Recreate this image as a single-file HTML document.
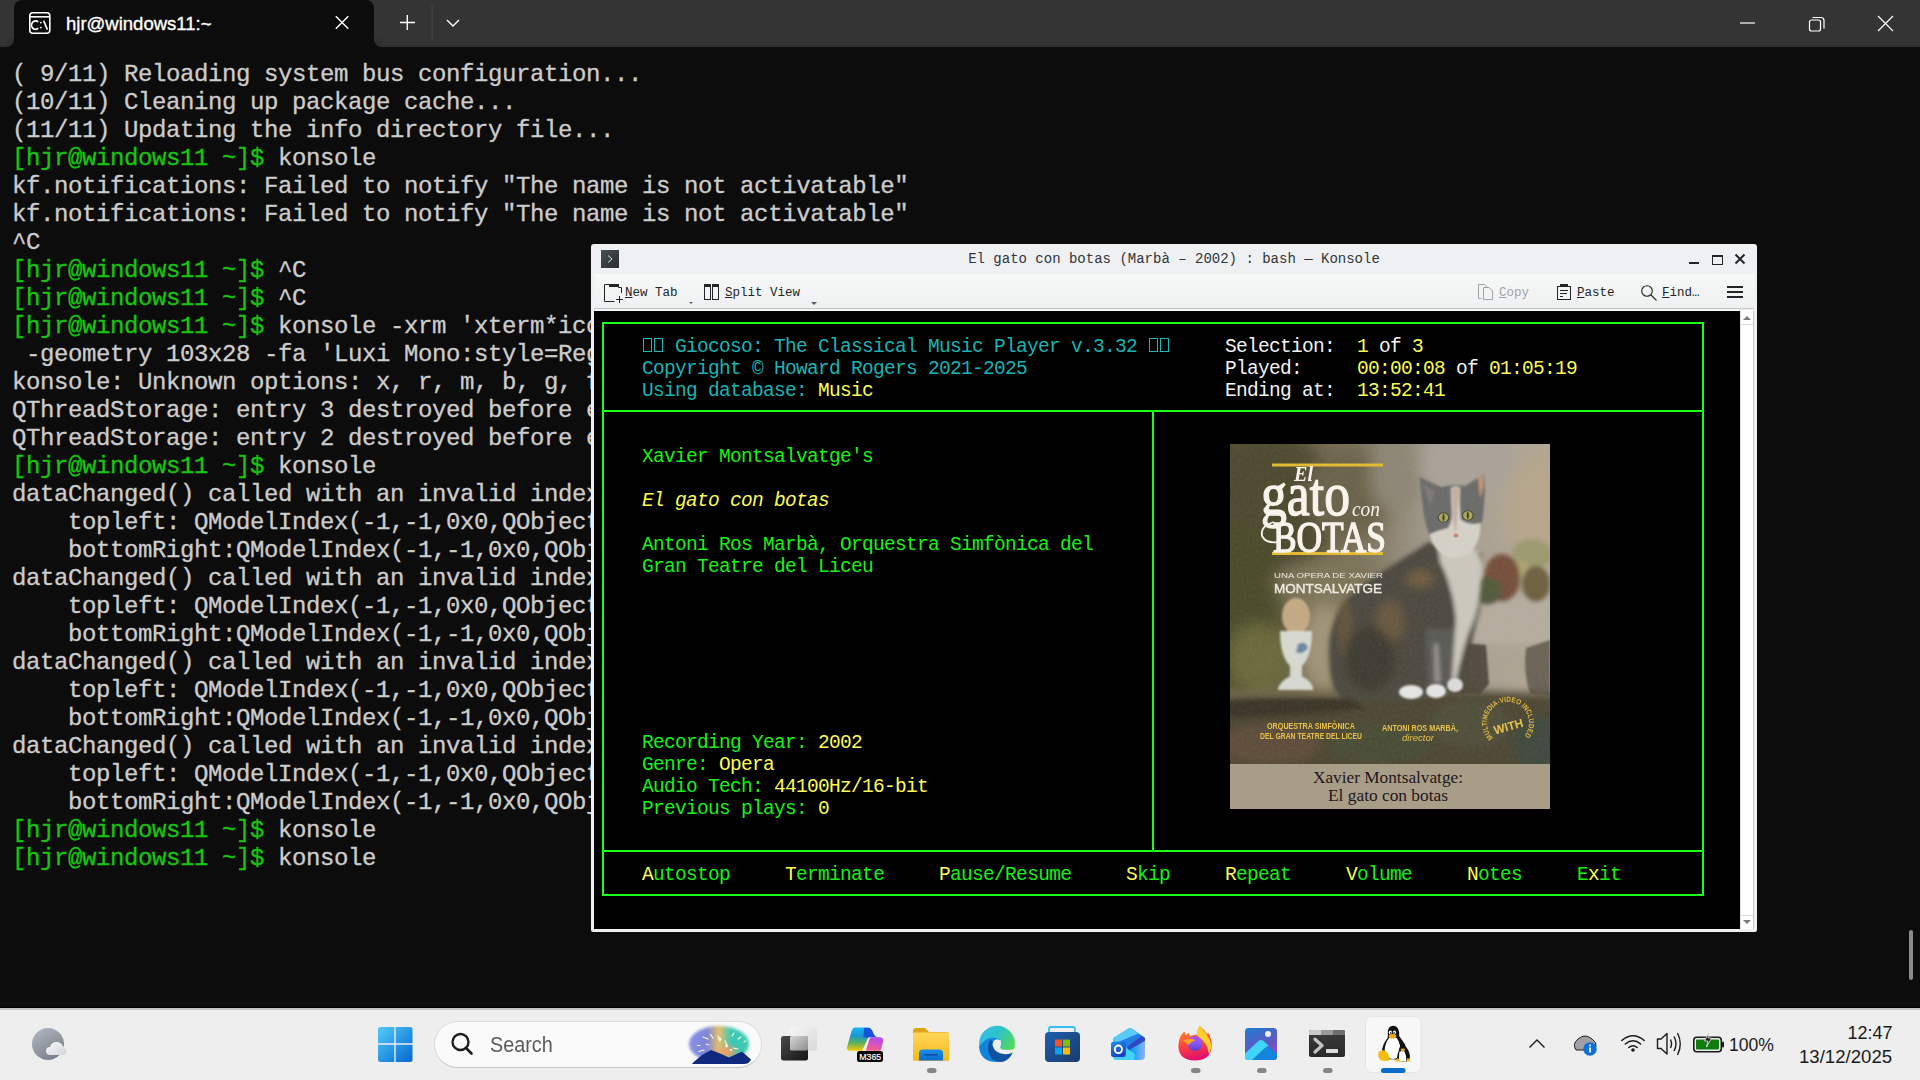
<!DOCTYPE html>
<html><head><meta charset="utf-8">
<style>
*{margin:0;padding:0;box-sizing:border-box}
html,body{width:1920px;height:1080px;overflow:hidden;background:#0c0c0c}
body{position:relative;font-family:"Liberation Sans",sans-serif}
.abs{position:absolute}
/* Windows terminal title bar */
#wtbg{position:absolute;left:0;top:0;width:1920px;height:47px;background:#343434;box-shadow:inset 0 -2px 0 #2f2f2f}
#wtc1{position:absolute;left:6px;top:39px;width:8px;height:8px;background:radial-gradient(circle at 0 0,#2f2f2f 7.5px,#0c0c0c 8.5px)}
#wtc2{position:absolute;left:374px;top:39px;width:8px;height:8px;background:radial-gradient(circle at 100% 0,#2f2f2f 7.5px,#0c0c0c 8.5px)}
#wttab{position:absolute;left:14px;top:0;width:360px;height:47px;background:#0c0c0c;border-radius:8px 8px 0 0}
#wttitle{position:absolute;left:66px;top:13px;font-size:18.5px;color:#fff;-webkit-text-stroke:0.35px #fff}
/* terminal text */
#term{position:absolute;left:12px;top:61px;font-family:"Liberation Mono",monospace;font-size:24px;letter-spacing:-0.4px;line-height:28px;color:#cccccc;white-space:pre;-webkit-text-stroke:0.3px currentColor}
#term .g{color:#16c60c}
/* konsole window */
#kwin{position:absolute;left:591px;top:244px;width:1166px;height:688px;background:#eff0f1;border-radius:3px 3px 2px 2px}
#ktitle{position:absolute;left:0;top:1px;width:1166px;height:29px;text-align:center;font-family:"Liberation Mono",monospace;font-size:14px;line-height:29px;color:#31363b;padding-left:0}
#ktb{position:absolute;left:3px;top:30px;width:1160px;height:35px;background:linear-gradient(#f7f8f8,#eff0f1);border-bottom:1px solid #c3c5c7}
#ktb2{position:absolute;left:3px;top:66px;width:1160px;height:1px;background:#fcfcfc}
#kterm{position:absolute;left:3px;top:67px;width:1146px;height:618px;background:#000}
#kscroll{position:absolute;left:1149px;top:67px;width:14px;height:618px;background:#fff;border-right:1px solid #c8c8c8;border-left:1px solid #e4e4e4}
.tbt{position:absolute;top:2px;font-family:"Liberation Mono",monospace;font-size:12.5px;line-height:35px;color:#232627}
#kgrid{position:absolute;left:0;top:0;font-family:"Liberation Mono",monospace;font-size:19.5px;letter-spacing:-0.7px;line-height:22px;white-space:pre;color:#18f018}
.kr{position:absolute;height:22px;white-space:pre;margin-top:2px}
.it{font-style:italic}
.tofu{display:inline-block;width:11px;height:22px;position:relative;vertical-align:top}
.tofu:after{content:"";position:absolute;left:1px;top:2px;width:9px;height:14px;border:1.5px solid #1ab8b8;box-sizing:border-box}
.c{color:#1ab3b3}.w{color:#f2f2f2}.y{color:#fcfc54}.gr{color:#18f018}
.gl{position:absolute;background:#18ff18}
/* taskbar */
#tbar{position:absolute;left:0;top:1007px;width:1920px;height:73px;background:#eeeeee;border-top:1px solid #000;box-shadow:inset 0 2px 0 #c3c3c3}
#search{position:absolute;left:434px;top:1021px;width:328px;height:47px;border-radius:24px;background:#fafafa;border:1px solid #dcdcdc;border-bottom-color:#c4c4c4}
.tt{position:absolute;font-family:"Liberation Sans",sans-serif;color:#1b1b1b;white-space:pre}
</style></head><body>
<div id="wtbg"></div><div id="wtc1"></div><div id="wtc2"></div>
<div id="wttab"></div>
<svg class="abs" style="left:0;top:0" width="480" height="47">
  <g fill="none" stroke="#fff" stroke-width="1.6">
    <rect x="29.8" y="12.8" width="20" height="20.5" rx="3"/>
    <line x1="30" y1="16.8" x2="50" y2="16.8"/>
  </g>
  <path d="M38.2 22 A3.9 4.3 0 1 0 38.2 28.2" fill="none" stroke="#fff" stroke-width="1.7"/><circle cx="40.8" cy="22.6" r="0.95" fill="#fff"/><circle cx="40.8" cy="27.6" r="0.95" fill="#fff"/><path d="M43.6 20.6 L47.4 29.6" stroke="#fff" stroke-width="1.6"/>
  <g stroke="#fff" stroke-width="1.4" fill="none">
    <path d="M335.8 16.2 L348.3 28.8 M348.3 16.2 L335.8 28.8"/>
    <path d="M400 22.5 H415 M407.3 15 V30"/>
    <path d="M447 20 L453 26 L459 20"/>
  </g>
  <rect x="431.6" y="5" width="1" height="36" fill="#4a4a4a"/>
</svg>
<div id="wttitle">hjr@windows11:~</div>
<svg class="abs" style="left:1700px;top:0" width="220" height="47">
  <g stroke="#fff" stroke-width="1.2" fill="none">
    <path d="M40 23 H55"/>
    <rect x="109.5" y="20" width="11" height="11" rx="2"/>
    <path d="M112.5 17.5 H121 Q124 17.5 124 20.5 V28.5"/>
    <path d="M178 16 L193 31 M193 16 L178 31"/>
  </g>
</svg>
<div id="term"><span>( 9/11) Reloading system bus configuration...
(10/11) Cleaning up package cache...
(11/11) Updating the info directory file...
<span class="g">[hjr@windows11 ~]$</span> konsole
kf.notifications: Failed to notify "The name is not activatable"
kf.notifications: Failed to notify "The name is not activatable"
^C
<span class="g">[hjr@windows11 ~]$</span> ^C
<span class="g">[hjr@windows11 ~]$</span> ^C
<span class="g">[hjr@windows11 ~]$</span> konsole -xrm 'xterm*iconHint: /home/hjr/giocoso.png'
 -geometry 103x28 -fa 'Luxi Mono:style=Regular' -fs 11
konsole: Unknown options: x, r, m, b, g, f, s
QThreadStorage: entry 3 destroyed before end of thread
QThreadStorage: entry 2 destroyed before end of thread
<span class="g">[hjr@windows11 ~]$</span> konsole
dataChanged() called with an invalid index range:
    topleft: QModelIndex(-1,-1,0x0,QObject(0x0))
    bottomRight:QModelIndex(-1,-1,0x0,QObject(0x0))
dataChanged() called with an invalid index range:
    topleft: QModelIndex(-1,-1,0x0,QObject(0x0))
    bottomRight:QModelIndex(-1,-1,0x0,QObject(0x0))
dataChanged() called with an invalid index range:
    topleft: QModelIndex(-1,-1,0x0,QObject(0x0))
    bottomRight:QModelIndex(-1,-1,0x0,QObject(0x0))
dataChanged() called with an invalid index range:
    topleft: QModelIndex(-1,-1,0x0,QObject(0x0))
    bottomRight:QModelIndex(-1,-1,0x0,QObject(0x0))
<span class="g">[hjr@windows11 ~]$</span> konsole
<span class="g">[hjr@windows11 ~]$</span> konsole</span></div>

<div id="kwin">
  <div id="ktitle">El gato con botas (Marbà – 2002) : bash — Konsole</div>
  <div id="ktb">
    <div class="tbt" style="left:31px"><u>N</u>ew Tab</div>
    <div class="tbt" style="left:131px"><u>S</u>plit View</div>
    <div class="tbt" style="left:905px;color:#a0a2a4"><u>C</u>opy</div>
    <div class="tbt" style="left:983px"><u>P</u>aste</div>
    <div class="tbt" style="left:1068px"><u>F</u>ind…</div>
  </div>
  <div id="ktb2"></div>
  <div id="kterm"></div>
  <div id="kscroll"></div>
  <svg class="abs" style="left:0;top:0" width="1166" height="688">
    <defs><linearGradient id="kig" x1="0" y1="0" x2="1" y2="1"><stop offset="0" stop-color="#475050"/><stop offset="1" stop-color="#2a2f2f"/></linearGradient></defs>
    <rect x="10" y="6" width="18" height="18" fill="url(#kig)"/>
    <path d="M17 11.5 L21 15 L17 18.5" stroke="#dfe3e3" stroke-width="1" fill="none"/>
    <!-- window buttons -->
    <rect x="1098" y="18" width="10" height="2" fill="#232627"/>
    <rect x="1121.5" y="11.5" width="10" height="9" fill="none" stroke="#232627" stroke-width="1"/>
    <rect x="1121" y="11" width="11" height="2" fill="#232627"/>
    <path d="M1144.5 10.5 L1153.5 19.5 M1153.5 10.5 L1144.5 19.5" stroke="#232627" stroke-width="2"/>
    <!-- new tab icon -->
    <g fill="none" stroke="#232627" stroke-width="1">
      <path d="M13.5 40.5 V57.5 H23.5 M30.5 49 V43.5 H27.5 V40.5 H13.5"/>
      <path d="M28.5 52 V59 M25 55.5 H32"/>
    </g>
    <rect x="18" y="40" width="10" height="3" fill="#232627"/>
    <path d="M98 58 L102 58 L100 60 Z" fill="#5c5f62"/>
    <!-- split icon -->
    <g fill="none" stroke="#232627" stroke-width="1">
      <rect x="113.5" y="40.5" width="6" height="15"/>
      <rect x="121.5" y="40.5" width="6" height="15"/>
    </g>
    <rect x="113" y="40" width="7" height="3" fill="#232627"/><rect x="121" y="40" width="7" height="3" fill="#232627"/>
    <path d="M220 58 L226 58 L223 61 Z" fill="#5c5f62"/>
    <!-- copy icon -->
    <g fill="none" stroke="#a0a2a4" stroke-width="1" transform="translate(3 0)">
      <path d="M887.5 54.5 H884.5 V40.5 H890.5 L893.5 43.5"/>
      <path d="M889.5 43.5 H895 L898.5 47 V55.5 H889.5 Z"/>
    </g>
    <!-- paste icon -->
    <g fill="none" stroke="#232627" stroke-width="1">
      <rect x="966.5" y="42.5" width="13" height="13"/>
      <path d="M969 46.5 H977 M969 49.5 H976 M969 52.5 H972"/>
    </g>
    <rect x="969" y="40" width="8" height="3" fill="#232627"/>
    <!-- find icon -->
    <g fill="none" stroke="#232627" stroke-width="1.1">
      <circle cx="1056" cy="47" r="5.3"/>
      <path d="M1060 51 L1065.5 56.5"/>
    </g>
    <!-- hamburger -->
    <rect x="1136" y="42" width="16" height="2" fill="#232627"/>
    <rect x="1136" y="47" width="16" height="2" fill="#232627"/>
    <rect x="1136" y="52" width="16" height="2" fill="#232627"/>
    <!-- scroll arrows -->
    <path d="M1152 76 L1156 72 L1160 76 Z" fill="#787a7c"/>
    <path d="M1152 676 L1156 680 L1160 676 Z" fill="#787a7c"/>
    <rect x="1150" y="80" width="12" height="1" fill="#d8d8d8"/>
    <rect x="1150" y="671" width="12" height="1" fill="#d8d8d8"/>
  </svg>
</div>
<svg class="abs" style="left:1230px;top:444px" width="320" height="365" viewBox="0 0 320 365">
 <defs>
  <filter id="b8" x="-30%" y="-30%" width="160%" height="160%"><feGaussianBlur stdDeviation="8"/></filter>
  <filter id="b4" x="-30%" y="-30%" width="160%" height="160%"><feGaussianBlur stdDeviation="4"/></filter>
  <filter id="b2" x="-30%" y="-30%" width="160%" height="160%"><feGaussianBlur stdDeviation="2"/></filter>
  <filter id="b1" x="-30%" y="-30%" width="160%" height="160%"><feGaussianBlur stdDeviation="1"/></filter>
  <filter id="noise" x="0" y="0" width="100%" height="100%">
   <feTurbulence type="fractalNoise" baseFrequency="0.35" numOctaves="2" seed="3"/>
   <feColorMatrix type="matrix" values="0 0 0 0 0.5  0 0 0 0 0.5  0 0 0 0 0.5  0 0 0 -1.6 1.3"/>
  </filter>
  <clipPath id="acl"><rect x="0" y="0" width="320" height="320"/></clipPath>
  <linearGradient id="abg" x1="0" y1="0" x2="1" y2="0">
   <stop offset="0" stop-color="#57512f"/><stop offset="0.4" stop-color="#7c735a"/><stop offset="0.65" stop-color="#a69e92"/><stop offset="1" stop-color="#b2a794"/>
  </linearGradient>
 </defs>
 <g clip-path="url(#acl)">
  <rect x="0" y="0" width="320" height="320" fill="url(#abg)"/>
  <g filter="url(#b8)">
   <ellipse cx="40" cy="60" rx="70" ry="70" fill="#4e4a2e"/>
   <ellipse cx="15" cy="170" rx="35" ry="90" fill="#4c4c2c"/>
   <ellipse cx="28" cy="215" rx="30" ry="35" fill="#6c6a3a"/>
   <ellipse cx="120" cy="50" rx="45" ry="45" fill="#6a6248"/>
   <ellipse cx="165" cy="30" rx="25" ry="40" fill="#8e8674"/>
   <ellipse cx="100" cy="140" rx="55" ry="25" fill="#7e7458"/>
   <ellipse cx="95" cy="205" rx="25" ry="45" fill="#a09478"/>
   <ellipse cx="240" cy="20" rx="50" ry="30" fill="#aaa39a"/>
   <ellipse cx="305" cy="70" rx="30" ry="60" fill="#b6a68c"/>
   <ellipse cx="270" cy="175" rx="50" ry="25" fill="#b4ab9c"/>
  </g>
  <!-- bowl and fruit -->
  <g filter="url(#b2)">
   <path d="M238 158 Q280 150 320 156 V198 Q280 202 238 196Z" fill="#b6ad9f"/>
   <ellipse cx="302" cy="110" rx="20" ry="15" fill="#9c9a70"/>
   <ellipse cx="285" cy="126" rx="16" ry="10" fill="#aea270"/>
   <ellipse cx="272" cy="134" rx="18" ry="24" fill="#74503a"/>
   <ellipse cx="257" cy="147" rx="15" ry="14" fill="#525a3a"/>
   <ellipse cx="306" cy="140" rx="14" ry="18" fill="#6e6040"/>
  </g>
  <!-- stones -->
  <g filter="url(#b1)">
   <path d="M222 198 L256 201 L259 240 L250 250 L220 250Z" fill="#524c40"/>
   <path d="M296 204 L320 196 V252 L300 250 Q293 228 296 204Z" fill="#6a6456"/>
  </g>
  <!-- ground -->
  <g filter="url(#b4)">
   <path d="M-10 248 Q80 244 160 250 L230 246 L330 250 V330 H-10Z" fill="#4e4632"/>
   <path d="M-10 250 Q60 248 120 252" stroke="#8a7e5e" stroke-width="4" fill="none"/>
   <path d="M-10 260 Q70 255 130 260 Q110 271 -10 273Z" fill="#3a3626"/>
   <ellipse cx="150" cy="300" rx="50" ry="20" fill="#4a4e34"/>
   <ellipse cx="240" cy="280" rx="40" ry="25" fill="#50503a"/>
   <ellipse cx="40" cy="300" rx="50" ry="20" fill="#5e4e3a"/>
   <ellipse cx="305" cy="300" rx="22" ry="30" fill="#404a3c"/>
  </g>
  <!-- egg cup -->
  <g filter="url(#b1)">
   <ellipse cx="66" cy="172" rx="14" ry="18" fill="#c4aa84"/>
   <path d="M50 187 H82 Q82 212 72 222 V232 Q84 239 83 246 H48 Q48 239 60 232 V222 Q50 212 50 187Z" fill="#d8dad2"/>
   <path d="M68 200 Q76 196 78 204 Q72 212 66 208Z" fill="#6a88a0"/>
  </g>
  <!-- cat body -->
  <g filter="url(#b2)">
   <path d="M198 98 C175 115 135 135 114 158 Q97 182 99 215 Q100 250 115 256 L170 256 L200 252 L232 246 Q240 200 250 165 L252 110 Q230 108 198 98Z" fill="#4e4a40"/>
   <ellipse cx="190" cy="135" rx="14" ry="9" fill="#8a6a42" opacity="0.6" filter="url(#b4)"/>
   <ellipse cx="160" cy="178" rx="14" ry="22" fill="#7e6440" opacity="0.6" filter="url(#b4)"/>
   <ellipse cx="115" cy="185" rx="8" ry="28" fill="#6e5a3c" opacity="0.6"/>
   <ellipse cx="140" cy="215" rx="25" ry="32" fill="#38342c" opacity="0.7" filter="url(#b4)"/>
   <path d="M196 185 L224 185 L224 240 L198 244Z" fill="#5e5e5a" opacity="0.8"/>
   <path d="M208 102 Q252 94 252 125 Q250 165 240 185 Q234 200 226 236 L222 236 Q224 200 226 175 Q222 140 210 118 Z" fill="#cdc8be"/><path d="M204 200 L208 200 L210 238 L205 238Z" fill="#b8b6b0" opacity="0.7"/>
   <path d="M-10 258 Q60 254 120 255 L135 264 Q60 268 -10 272Z" fill="#3a3628"/>
  </g>
  <g filter="url(#b1)">
   <ellipse cx="181" cy="248" rx="12" ry="7" fill="#e6e6e4"/>
   <ellipse cx="206" cy="247" rx="10" ry="7" fill="#e6e6e4"/>
   <ellipse cx="225" cy="241" rx="8" ry="7" fill="#dededc"/>
  </g>
  <!-- cat head -->
  <g filter="url(#b1)">
   <path d="M189.5 33 L211 43 Q223 40 235 42 L254 30 Q256 50 252.5 75 Q250 98 240 108 Q232 113 225 113 Q214 112 206 102 Q197 90 194 72 Q191 52 189.5 33Z" fill="#6a6a68"/>
   <path d="M193 40 L205 48 L200 62Z" fill="#7c7876"/>
   <path d="M221 44 Q226 41 230 44 Q229 62 231 76 Q240 82 251 79 Q251 96 242 107 Q233 114 225 114 Q212 113 205 103 Q200 96 200 90 Q210 86 218 84 Q222 78 222 70 Q221 56 221 44Z" fill="#d6d1c8"/>
   <path d="M222 45 Q226 42 229 45 Q227.5 60 227 78 L225.5 90 L223.5 78 Q223 60 222 45Z" fill="#c2ae9e"/>
   <path d="M248 34 L253.5 31 Q254 45 250 54Z" fill="#c09478"/>
  </g>
  <ellipse cx="213.5" cy="73.5" rx="5.8" ry="5" fill="#3e3e2a"/>
  <ellipse cx="237.8" cy="71.5" rx="5.8" ry="5" fill="#3e3e2a"/>
  <ellipse cx="213.5" cy="73.5" rx="4.8" ry="4.2" fill="#aaa658"/>
  <ellipse cx="237.8" cy="71.5" rx="4.8" ry="4.2" fill="#aaa658"/>
  <ellipse cx="213.5" cy="73.5" rx="1" ry="3.4" fill="#3a3a20"/>
  <ellipse cx="237.8" cy="71.5" rx="1" ry="3.4" fill="#3a3a20"/>
  <ellipse cx="226" cy="91.5" rx="2.6" ry="2" fill="#c48a72"/>
  <!-- noise overlay -->
  <rect x="0" y="0" width="320" height="320" filter="url(#noise)" opacity="0.07"/>
  <!-- title text -->
  <rect x="42" y="19.5" width="111" height="3" fill="#e2ba34"/>
  <rect x="42" y="108" width="111" height="3" fill="#e2ba34"/>
  <g fill="#f8f4ec" font-family="Liberation Serif">
   <text x="64" y="37" font-size="21" font-style="italic" font-weight="bold" textLength="19" lengthAdjust="spacingAndGlyphs">El</text>
   <text x="31" y="71" font-size="62" stroke="#f8f4ec" stroke-width="1.4" textLength="89" lengthAdjust="spacingAndGlyphs">gato</text>
   <text x="122" y="72" font-size="21" font-style="italic" textLength="28" lengthAdjust="spacingAndGlyphs">con</text>
   <text x="43" y="108" font-size="44" stroke="#f8f4ec" stroke-width="1.5" textLength="113" lengthAdjust="spacingAndGlyphs">BOTAS</text>
  </g>
  <path d="M44 78 Q30 82 32 92 Q36 100 50 98" stroke="#f8f4ec" stroke-width="1.8" fill="none"/>
  <g fill="#eeeae2" font-family="Liberation Sans">
   <text x="44" y="133.5" font-size="8" textLength="109" lengthAdjust="spacingAndGlyphs">UNA OPERA DE XAVIER</text>
   <text x="44" y="148.5" font-size="12.5" stroke="#eeeae2" stroke-width="0.4" textLength="108" lengthAdjust="spacingAndGlyphs">MONTSALVATGE</text>
  </g>
  <g fill="#e8c24c" font-family="Liberation Sans" font-weight="bold">
   <text x="37" y="285" font-size="8.5" textLength="88" lengthAdjust="spacingAndGlyphs">ORQUESTRA SIMFÒNICA</text>
   <text x="30" y="295" font-size="8.5" textLength="102" lengthAdjust="spacingAndGlyphs">DEL GRAN TEATRE DEL LICEU</text>
   <text x="152" y="287" font-size="8.5" textLength="76" lengthAdjust="spacingAndGlyphs">ANTONI ROS MARBÀ,</text>
   <text x="172" y="297" font-size="9" font-style="italic" font-weight="normal" textLength="32" lengthAdjust="spacingAndGlyphs">director</text>
  </g>
  <path id="wc" d="M263.2 293.8 A21 21 0 1 1 292.8 293.8" fill="none"/>
  <text font-family="Liberation Sans" font-weight="bold" font-size="7.5" fill="#e0b840"><textPath href="#wc" textLength="96" lengthAdjust="spacingAndGlyphs">MULTIMEDIA-VIDEO INCLUDED</textPath></text>
  <text x="263" y="287" font-family="Liberation Sans" font-size="12" font-weight="bold" fill="#e8c24c" transform="rotate(-15 277 281)" textLength="30" lengthAdjust="spacingAndGlyphs">WITH</text>
 </g>
 <rect x="0" y="320" width="320" height="45" fill="#a89d87"/>
 <g fill="#1e1620" font-family="Liberation Serif" text-anchor="middle">
  <text x="158" y="338.5" font-size="16.5" textLength="150" lengthAdjust="spacingAndGlyphs">Xavier Montsalvatge:</text>
  <text x="158" y="356.5" font-size="16.5" textLength="120" lengthAdjust="spacingAndGlyphs">El gato con botas</text>
 </g>
</svg>
<div id="kgrid">
<div class="kr" style="left:642px;top:334px"><span class="c"><i class="tofu"></i><i class="tofu"></i> Giocoso: The Classical Music Player v.3.32 <i class="tofu"></i><i class="tofu"></i></span></div>
<div class="kr" style="left:1225px;top:334px"><span class="w">Selection:  </span><span class="y">1</span><span class="w"> of </span><span class="y">3</span></div>
<div class="kr" style="left:642px;top:356px"><span class="c">Copyright © Howard Rogers 2021-2025</span></div>
<div class="kr" style="left:1225px;top:356px"><span class="w">Played:     </span><span class="y">00:00:08</span><span class="w"> of </span><span class="y">01:05:19</span></div>
<div class="kr" style="left:642px;top:378px"><span class="c">Using database: </span><span class="y">Music</span></div>
<div class="kr" style="left:1225px;top:378px"><span class="w">Ending at:  </span><span class="y">13:52:41</span></div>
<div class="kr" style="left:642px;top:444px"><span class="gr">Xavier Montsalvatge's</span></div>
<div class="kr" style="left:642px;top:488px"><span class="y it">El gato con botas</span></div>
<div class="kr" style="left:642px;top:532px"><span class="gr">Antoni Ros Marbà, Orquestra Simfònica del</span></div>
<div class="kr" style="left:642px;top:554px"><span class="gr">Gran Teatre del Liceu</span></div>
<div class="kr" style="left:642px;top:730px"><span class="gr">Recording Year: </span><span class="y">2002</span></div>
<div class="kr" style="left:642px;top:752px"><span class="gr">Genre: </span><span class="y">Opera</span></div>
<div class="kr" style="left:642px;top:774px"><span class="gr">Audio Tech: </span><span class="y">44100Hz/16-bit</span></div>
<div class="kr" style="left:642px;top:796px"><span class="gr">Previous plays: </span><span class="y">0</span></div>
<div class="kr" style="left:642px;top:862px"><span class="y">A</span><span class="gr">u</span><span class="gr">t</span><span class="gr">o</span><span class="gr">s</span><span class="gr">t</span><span class="gr">o</span><span class="gr">p</span></div>
<div class="kr" style="left:785px;top:862px"><span class="y">T</span><span class="gr">e</span><span class="gr">r</span><span class="gr">m</span><span class="gr">i</span><span class="gr">n</span><span class="gr">a</span><span class="gr">t</span><span class="gr">e</span></div>
<div class="kr" style="left:939px;top:862px"><span class="y">P</span><span class="gr">a</span><span class="gr">u</span><span class="gr">s</span><span class="gr">e</span><span class="gr">/</span><span class="gr">R</span><span class="gr">e</span><span class="gr">s</span><span class="gr">u</span><span class="gr">m</span><span class="gr">e</span></div>
<div class="kr" style="left:1126px;top:862px"><span class="y">S</span><span class="gr">k</span><span class="gr">i</span><span class="gr">p</span></div>
<div class="kr" style="left:1225px;top:862px"><span class="y">R</span><span class="gr">e</span><span class="gr">p</span><span class="gr">e</span><span class="gr">a</span><span class="gr">t</span></div>
<div class="kr" style="left:1346px;top:862px"><span class="y">V</span><span class="gr">o</span><span class="gr">l</span><span class="gr">u</span><span class="gr">m</span><span class="gr">e</span></div>
<div class="kr" style="left:1467px;top:862px"><span class="y">N</span><span class="gr">o</span><span class="gr">t</span><span class="gr">e</span><span class="gr">s</span></div>
<div class="kr" style="left:1577px;top:862px"><span class="gr">E</span><span class="y">x</span><span class="gr">i</span><span class="gr">t</span></div>
<div class="gl" style="left:602px;top:322px;width:1102px;height:2px"></div>
<div class="gl" style="left:602px;top:410px;width:1102px;height:2px"></div>
<div class="gl" style="left:602px;top:850px;width:1102px;height:2px"></div>
<div class="gl" style="left:602px;top:894px;width:1102px;height:2px"></div>
<div class="gl" style="left:602px;top:322px;width:2px;height:574px"></div>
<div class="gl" style="left:1702px;top:322px;width:2px;height:574px"></div>
<div class="gl" style="left:1152px;top:410px;width:2px;height:442px"></div>
</div>

<div class="abs" style="left:1909px;top:930px;width:4px;height:50px;border-radius:2px;background:#8a8a8a"></div>
<div id="tbar"></div>
<div id="search"></div>
<div class="tt" style="left:490px;top:1032px;font-size:22px;color:#5b5b5b;transform:scaleX(0.9);transform-origin:0 0">Search</div>
<div class="tt" style="left:1729px;top:1034.5px;font-size:17.6px">100%</div>
<div class="tt" style="left:1847.5px;top:1022.5px;font-size:18px">12:47</div>
<div class="tt" style="left:1799px;top:1046px;font-size:18.6px">13/12/2025</div>
<svg class="abs" style="left:0;top:1008px" width="1920" height="72">
 <defs>
  <linearGradient id="moon" x1="0" y1="0" x2="0.6" y2="1"><stop offset="0" stop-color="#b3bac3"/><stop offset="1" stop-color="#7c828a"/></linearGradient>
  <linearGradient id="cloudg" x1="0" y1="0" x2="1" y2="1"><stop offset="0" stop-color="#fbfbfc"/><stop offset="1" stop-color="#cfd3d9"/></linearGradient>
  <linearGradient id="winlogo" gradientUnits="userSpaceOnUse" x1="378" y1="19" x2="413" y2="54"><stop offset="0" stop-color="#52cbf7"/><stop offset="1" stop-color="#0366d1"/></linearGradient>
  <linearGradient id="fw1" x1="0" y1="0" x2="1" y2="0"><stop offset="0" stop-color="#8a8ee8"/><stop offset="0.3" stop-color="#7a86d8"/><stop offset="0.5" stop-color="#e8c068"/><stop offset="0.7" stop-color="#38c8b8"/><stop offset="1" stop-color="#40c8b0"/></linearGradient><filter id="fwb" x="-30%" y="-30%" width="160%" height="160%"><feGaussianBlur stdDeviation="1.8"/></filter><filter id="fwb2" x="-50%" y="-50%" width="200%" height="200%"><feGaussianBlur stdDeviation="2.5"/></filter>
  <linearGradient id="tvl" x1="0" y1="0" x2="1" y2="1"><stop offset="0" stop-color="#f6f6f6"/><stop offset="1" stop-color="#d8d8d8"/></linearGradient>
  <linearGradient id="tvd" x1="0" y1="0" x2="1" y2="1"><stop offset="0" stop-color="#4a4a4a"/><stop offset="1" stop-color="#141414"/></linearGradient>
  <linearGradient id="tvm" x1="0" y1="0" x2="1" y2="1"><stop offset="0" stop-color="#d6d6d6"/><stop offset="1" stop-color="#8e8e8e"/></linearGradient>
  <linearGradient id="cop1" x1="0" y1="0" x2="0" y2="1"><stop offset="0" stop-color="#18b4f8"/><stop offset="0.35" stop-color="#1a98d0"/><stop offset="0.65" stop-color="#58b060"/><stop offset="1" stop-color="#f8c800"/></linearGradient>
  <linearGradient id="cop2" x1="0.6" y1="0" x2="0.3" y2="1"><stop offset="0" stop-color="#b04cf0"/><stop offset="1" stop-color="#fc5c8a"/></linearGradient>
  <linearGradient id="foldb" x1="0" y1="0" x2="0" y2="1"><stop offset="0" stop-color="#1a90e8"/><stop offset="1" stop-color="#0a6ccc"/></linearGradient><linearGradient id="fold" x1="0" y1="0" x2="0" y2="1"><stop offset="0" stop-color="#ffd75a"/><stop offset="1" stop-color="#f6b818"/></linearGradient>
  <linearGradient id="edge1" x1="0" y1="0" x2="1" y2="0.6"><stop offset="0" stop-color="#38bcf2"/><stop offset="0.5" stop-color="#2cc4c8"/><stop offset="1" stop-color="#58dc48"/></linearGradient>
  <linearGradient id="store" x1="0" y1="0" x2="1" y2="1"><stop offset="0" stop-color="#1b5fae"/><stop offset="1" stop-color="#1c3a6e"/></linearGradient>
  <linearGradient id="outl" x1="0" y1="0" x2="1" y2="0"><stop offset="0" stop-color="#38c8f8"/><stop offset="0.6" stop-color="#10a0f0"/><stop offset="1" stop-color="#90b0f8"/></linearGradient><linearGradient id="olo" x1="0" y1="0" x2="0.5" y2="1"><stop offset="0" stop-color="#1a8ef0"/><stop offset="1" stop-color="#1a40c0"/></linearGradient>
  <linearGradient id="ffg" x1="0" y1="0" x2="0.2" y2="1"><stop offset="0" stop-color="#ff9a1e"/><stop offset="0.55" stop-color="#ff4a3c"/><stop offset="1" stop-color="#e4106c"/></linearGradient><linearGradient id="ffp" x1="0" y1="0" x2="0" y2="1"><stop offset="0" stop-color="#b24af0"/><stop offset="0.5" stop-color="#8a58f8"/><stop offset="1" stop-color="#5a3cc8"/></linearGradient><radialGradient id="ff1" cx="0.45" cy="0.6" r="0.6"><stop offset="0" stop-color="#ffb43a"/><stop offset="0.7" stop-color="#ff5a2a"/><stop offset="1" stop-color="#e8225a"/></radialGradient>
  <linearGradient id="termg" x1="0" y1="0" x2="0" y2="1"><stop offset="0" stop-color="#3c3c3c"/><stop offset="1" stop-color="#2a2a2a"/></linearGradient><linearGradient id="photo" x1="0" y1="0" x2="0.5" y2="1"><stop offset="0" stop-color="#1a7ed8"/><stop offset="0.6" stop-color="#5a5ac0"/><stop offset="1" stop-color="#8a50c8"/></linearGradient>
 </defs>
 <!-- weather moon -->
 <circle cx="48" cy="36" r="16" fill="url(#moon)"/>
 <path d="M50.5 47 Q46 47 46 43 Q46 39 50 39 Q51.5 34 56.5 34 Q61.5 34 63 38.5 Q66.5 39.5 66.5 43 Q66.5 47 62 47Z" fill="url(#cloudg)"/>
 <!-- start -->
 <g fill="url(#winlogo)">
  <path d="M378 35.3 V21.5 Q378 19 380.5 19 H394.3 V35.3Z"/>
  <path d="M395.7 19 H410 Q412.5 19 412.5 21.5 V35.3 H395.7Z"/>
  <path d="M378 36.7 H394.3 V54 H380.5 Q378 54 378 51.5Z"/>
  <path d="M395.7 36.7 H412.5 V51.5 Q412.5 54 410 54 H395.7Z"/>
 </g>
 <!-- search icon -->
 <circle cx="460.5" cy="34" r="8" fill="none" stroke="#1b1b1b" stroke-width="2.3"/>
 <path d="M466 40 L471.5 45.5" stroke="#1b1b1b" stroke-width="2.6" stroke-linecap="round"/>
 <!-- fireworks -->
 <g filter="url(#fwb)">
  <ellipse cx="719" cy="36" rx="30" ry="18" fill="url(#fw1)"/>
 </g>
 <ellipse cx="727" cy="44" rx="9" ry="6" fill="#ff9a60" opacity="0.8" filter="url(#fwb2)"/>
 <path d="M692 55.5 L702 47 L711 42 L719 45 L729 49.5 L742 43.5 L751 51.5 Q749 56 744 56 H698 Q692 56 692 55.5Z" fill="#0f2a7c"/>
 <g stroke="#fff8d8" stroke-width="1.2" stroke-linecap="round">
  <path d="M710.5 26.5 L713 30"/><path d="M703 29 L708 31"/><path d="M697.5 37.5 L700 37.5"/><path d="M699 43.5 L704 42"/>
  <path d="M718 28 L720 33"/><path d="M725 33 L727 37"/><path d="M732 28 L734 25"/><path d="M738 31 L741 29"/><path d="M744 34 L745.5 33"/><path d="M733 40 L738 41"/><path d="M706 36 L709 37"/>
 </g>
 <g fill="#fffbe6"><circle cx="720" cy="31" r="1.6"/><circle cx="726.5" cy="38" r="1.4"/><circle cx="731" cy="42" r="1"/></g>
 <!-- task view -->
 <rect x="790" y="19.5" width="27" height="23" rx="2" fill="url(#tvl)"/>
 <rect x="781" y="28" width="27" height="24.5" rx="2.5" fill="url(#tvd)"/>
 <rect x="790" y="28" width="18" height="14.5" rx="1.5" fill="url(#tvm)"/>
 <!-- copilot -->
 <path d="M855 19.6 H868.5 Q872.5 19.6 871 24 L862 42.7 H849.5 Q846 42.7 847.2 38.6 L851.2 24.3 Q852.6 19.6 855 19.6Z" fill="url(#cop1)"/>
 <path d="M864 20 Q870 18.8 872.5 23 Q874 28.5 877.5 29.3 L863.5 29.6 Z" fill="#1c52d8"/>
 <path d="M871.5 29.3 H879.5 Q884 29.3 883 34 L880.6 42.7 H865.8 L869 32.5 Q869.8 29.3 871.5 29.3Z" fill="url(#cop2)"/>
 <rect x="857" y="43" width="26" height="11" rx="2.5" fill="#050505"/>
 <text x="859.2" y="52.2" font-family="Liberation Sans" font-size="9.8" fill="#fff" stroke="#fff" stroke-width="0.2" textLength="22" lengthAdjust="spacingAndGlyphs">M365</text>
 <!-- folder -->
 <path d="M913 23 Q913 20 916 20 H925 L929 24 H946 Q949 24 949 27 V52.5 H913Z" fill="#e0a31a"/>
 <rect x="913" y="24.5" width="36" height="28" rx="1.5" fill="url(#fold)"/>
 <path d="M919 52.5 V45 Q919 41.5 922.5 41.5 H939.5 Q943 41.5 943 45 V52.5Z" fill="url(#foldb)"/>
 <rect x="924.5" y="46" width="13" height="1.5" fill="#0d4a98"/>
 <rect x="927" y="60" width="9.5" height="5" rx="2.5" fill="#868686"/>
 <!-- edge -->
 <circle cx="997" cy="35.8" r="18" fill="url(#edge1)"/>
 <path d="M979 39 Q988 25 1001 32 Q993 32.5 992.5 39 Q992 48 1003 48.5 Q1008 48.5 1012.5 44.8 Q1006 54 997 54 Q979 54 979 36.5Z" fill="#1184dc"/>
 <path d="M990 32 Q985 42 992 51 Q998 55 1004 53.5 Q1010 51 1012.5 44.8 Q1003 48.5 996 43 Q991 38 993 33.5Z" fill="#0e52a0"/>
 <path d="M1001 32.8 Q997 29.5 993.5 33 Q991 38 996 43 Q1003 48.5 1012.5 44.8 L1015 41 Q1008 42.5 1002 41.5 Q999 40 1001 37Z" fill="#eeeeee"/>
 <!-- store -->
 <path d="M1049 27 V21 Q1049 19 1051 19 H1073 Q1075 19 1075 21 V27" fill="none" stroke="#3ac0f0" stroke-width="1.8"/>
 <rect x="1045" y="24" width="35" height="30" rx="4" fill="url(#store)"/>
 <rect x="1055" y="31.5" width="7" height="7" fill="#f35325"/><rect x="1063" y="31.5" width="7" height="7" fill="#81bc06"/>
 <rect x="1055" y="39.5" width="7" height="7" fill="#05a6f0"/><rect x="1063" y="39.5" width="7" height="7" fill="#ffba08"/>
 <!-- outlook -->
 <path d="M1113 30.3 L1128 20.8 Q1130 19.6 1132 20.8 L1145 29.5 V48 Q1145 52 1141 52 H1117 Q1113 52 1113 48Z" fill="url(#outl)"/>
 <path d="M1113 30 L1127.5 21 Q1130 19.5 1133 21.2 L1138.3 25.75 L1118.75 33.7 Q1114 34 1113 31Z" fill="#5ccaf8"/>
 <path d="M1118.75 33.7 L1138.3 25.75 L1141.7 27.8 L1126.7 39.1Z" fill="#2480e2"/>
 <path d="M1126.7 39.1 L1141.7 27.8 L1145 30.3 V32.8 L1129.2 42Z" fill="#2c48c4"/>
 <path d="M1113.3 32.8 L1125.8 40.3 L1134.2 45.3 Q1135.5 48 1134.2 52 H1117 Q1113.3 52 1113.3 48Z" fill="#40d2fa"/>
 <rect x="1111" y="33.7" width="14.8" height="15.3" rx="2.5" fill="url(#olo)"/>
 <ellipse cx="1118.4" cy="41.3" rx="3.6" ry="3.8" fill="none" stroke="#fff" stroke-width="1.9"/>
 <!-- firefox -->
 <path d="M1178.4 38 Q1178.5 28 1184.4 23.5 L1186 27 L1188.6 24.8 L1190 28 Q1194 26.5 1197 26.5 Q1197 21 1199.7 18 Q1205 22 1207 26 L1208.5 25 Q1212 32 1211.6 38 Q1211 52.5 1195 52.5 Q1178.4 52 1178.4 38Z" fill="url(#ffg)"/>
 <path d="M1197 27 Q1197 21 1199.7 18 Q1206 25 1210 32 Q1212.5 40 1209 46 Q1207 34 1199 29.5Z" fill="#ffcf2a"/>
 <circle cx="1195" cy="35.4" r="7.4" fill="url(#ffp)"/>
 <path d="M1183 32.5 Q1190 30 1195.5 32 Q1191 34 1188 37 Q1186 34.5 1183 32.5Z" fill="#ffa51e"/>
 <rect x="1191" y="60" width="9.5" height="5" rx="2.5" fill="#868686"/>
 <!-- photos -->
 <rect x="1245" y="20" width="32" height="32" rx="3.5" fill="url(#photo)"/>
 <path d="M1245 45.5 L1258.5 33 Q1261 31 1263.5 33 L1268.5 37.5 L1252.5 52 H1248.5 Q1245 52 1245 48.5Z" fill="#40d4f8"/>
 <path d="M1252 52 L1265.5 39.5 Q1267 38.5 1269 39 L1277 45.5 V48.5 Q1277 52 1273.5 52Z" fill="#1484dc"/>
 <circle cx="1268" cy="26" r="3" fill="#f0f0f2"/>
 <rect x="1257" y="60" width="9.5" height="5" rx="2.5" fill="#868686"/>
 <!-- terminal -->
 <rect x="1309" y="22" width="36" height="27" rx="2" fill="url(#termg)"/>
 <path d="M1309 24 Q1309 22 1311 22 H1321 V27 H1309Z" fill="#c8c8c8"/><rect x="1321" y="22" width="12" height="5" fill="#9a9a9a"/><path d="M1333 22 H1343 Q1345 22 1345 24 V27 H1333Z" fill="#6e6e6e"/>
 <path d="M1315 31.3 L1322 37.6 L1315 44" fill="none" stroke="#c4c4c4" stroke-width="3.3" stroke-linecap="round" stroke-linejoin="round"/>
 <rect x="1326" y="41" width="12" height="4" rx="0.5" fill="#dcdcdc"/>
 <rect x="1323" y="60" width="9.5" height="5" rx="2.5" fill="#868686"/>
 <!-- tux active -->
 <rect x="1365.5" y="8.5" width="55.5" height="56" rx="6" fill="#f7f7f7" stroke="#e4e4e4" stroke-width="1"/>
 <rect x="1381" y="60" width="24.5" height="5" rx="2.5" fill="#0a6cc8"/>
 <g>
  <path d="M1393.5 17.8 Q1387.5 18 1387.8 25 Q1388 29 1387.5 30 Q1382 37 1382 44 L1383 51 L1397 51.5 L1404 50 Q1406 44 1405.4 37 Q1402 32 1399.2 28 Q1399.5 18 1393.5 17.8Z" fill="#111"/>
  <path d="M1389 30 Q1384.5 36 1384.8 43 Q1385.5 50.5 1392 51 Q1399 51 1400.3 45 Q1401 36 1396.8 30Z" fill="#fff"/>
  <ellipse cx="1390.4" cy="24.6" rx="1.6" ry="2" fill="#fff"/><ellipse cx="1394.5" cy="24.6" rx="1.6" ry="2" fill="#fff"/>
  <ellipse cx="1390.8" cy="25" rx="0.7" ry="1" fill="#111"/><ellipse cx="1394.1" cy="25" rx="0.7" ry="1" fill="#111"/>
  <ellipse cx="1392.5" cy="28.2" rx="3.8" ry="2.3" fill="#e8aa18"/>
  <path d="M1378.5 44 Q1383 41 1386 43 L1389.4 48 Q1390 52 1388 53 L1381 52.5 Q1377.5 50 1378.5 44Z" fill="#f5bc10"/>
  <path d="M1402.8 37 Q1399 38 1399 42 Q1397 46 1397 51 Q1398 53.6 1406.5 53.6 Q1410 52 1410 48 Q1409 42 1406 39 Q1405 37 1402.8 37Z" fill="#111"/>
  <path d="M1399.5 43.5 Q1398.7 48 1399 53 L1406 53.6 Q1406.8 47 1404 43Z" fill="#fff"/>
  <ellipse cx="1402.8" cy="41.7" rx="2.3" ry="1.3" fill="#e8aa18"/>
  <path d="M1395 53.6 L1397.5 50 Q1400 51 1400.8 53.6Z" fill="#f5bc10"/>
  <path d="M1406 53.6 L1407.5 50 Q1410 50.5 1410.6 53.6Z" fill="#f5bc10"/>
 </g>
 <!-- tray chevron -->
 <path d="M1529.5 39.5 L1537 32 L1544.5 39.5" fill="none" stroke="#1b1b1b" stroke-width="1.4"/>
 <!-- cloud info -->
 <path d="M1576 42 Q1572 36 1578 31 Q1585 25 1592 31 Q1597 34 1596 39 L1590 42Z" fill="#9ea0a3" stroke="#222" stroke-width="1"/>
 <circle cx="1590" cy="41" r="6.7" fill="#0f6fd8"/>
 <rect x="1589.2" y="39.5" width="1.7" height="5" fill="#fff"/><circle cx="1590" cy="37.5" r="1" fill="#fff"/>
 <!-- wifi -->
 <g fill="none" stroke="#1b1b1b" stroke-width="1.5" stroke-linecap="round">
  <path d="M1621.8 32.5 Q1633 23 1644.2 32.5"/>
  <path d="M1625.3 36 Q1633 29.5 1640.7 36"/>
  <path d="M1628.8 39.5 Q1633 36 1637.2 39.5"/>
 </g>
 <circle cx="1633" cy="42" r="1.8" fill="#1b1b1b"/>
 <!-- speaker -->
 <g fill="none" stroke="#1b1b1b" stroke-width="1.4" stroke-linejoin="round">
  <path d="M1657.5 31 H1661 L1667 25.5 V46 L1661 40.5 H1657.5Z"/>
  <path d="M1670.5 31.5 Q1672.5 35.8 1670.5 40"/>
  <path d="M1674 28.5 Q1678 35.8 1674 43"/>
  <path d="M1677.5 25 Q1683 35.8 1677.5 47"/>
 </g>
 <!-- battery -->
 <rect x="1693.8" y="29.3" width="27.5" height="14.5" rx="3" fill="none" stroke="#1b1b1b" stroke-width="1.6"/>
 <rect x="1722" y="33.5" width="2" height="6" rx="1" fill="#1b1b1b"/>
 <rect x="1696" y="31.5" width="23" height="10" rx="1" fill="#107c10"/>
 <path d="M1709 24 L1704.5 33 H1708 L1706.5 39 L1711.5 30 H1708Z" fill="#1b1b1b" stroke="#eee" stroke-width="0.8"/>
</svg>
</body></html>
